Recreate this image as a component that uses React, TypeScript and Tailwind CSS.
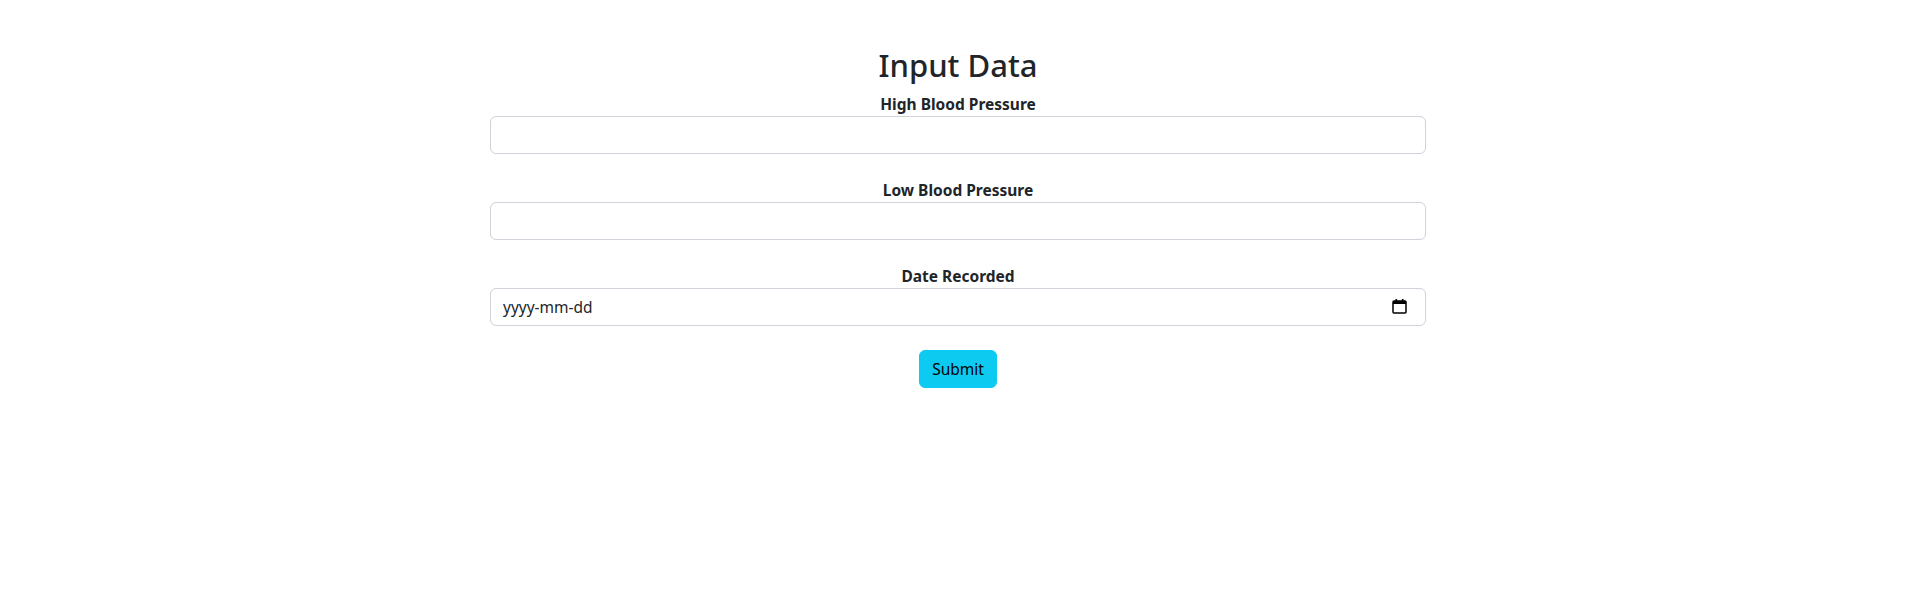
import * as React from "react"

function CalendarIcon() {
  return (
    <svg width="15" height="16" viewBox="0 0 15 16" className="block">
      <rect x="1" y="3" width="13" height="12" rx="1" fill="none" stroke="#000" strokeWidth="1.5" />
      <rect x="1" y="3" width="13" height="3" fill="#000" />
      <rect x="3.5" y="1" width="1.6" height="3" fill="#000" />
      <rect x="9.9" y="1" width="1.6" height="3" fill="#000" />
    </svg>
  )
}

function Field({ label, children }: { label: string; children: React.ReactNode }) {
  return (
    <div className="mb-6">
      <label className="block text-center text-[15.5px] font-bold leading-6 text-[#212529]">{label}</label>
      {children}
    </div>
  )
}

const inputCls =
  "block w-full h-[38px] rounded-md border border-[#ced4da] bg-white px-3 text-[15.5px] text-[#212529] outline-none"

export default function App() {
  return (
    <div className="min-h-screen bg-white pt-[46px] text-[#212529]" style={{ fontFamily: '"Noto Sans", "Open Sans", sans-serif' }}>
      <div className="mx-auto w-[936px]">
        <h2 className="mb-2 text-center text-[31px] font-medium leading-[38.4px]">Input Data</h2>
        <form>
          <Field label="High Blood Pressure">
            <input type="text" className={inputCls} />
          </Field>
          <Field label="Low Blood Pressure">
            <input type="text" className={inputCls} />
          </Field>
          <Field label="Date Recorded">
            <div className="relative">
              <input
                type="text"
                readOnly
                placeholder="yyyy-mm-dd"
                className={inputCls + " placeholder:text-[#212529]"}
              />
              <span className="pointer-events-none absolute right-[19px] top-[10px]">
                <CalendarIcon />
              </span>
            </div>
          </Field>
          <div className="flex justify-center">
            <button
              type="button"
              className="h-[38px] rounded-md border border-[#0dcaf0] bg-[#0dcaf0] px-3 text-[15.5px] leading-6 text-black"
            >
              Submit
            </button>
          </div>
        </form>
      </div>
    </div>
  )
}
